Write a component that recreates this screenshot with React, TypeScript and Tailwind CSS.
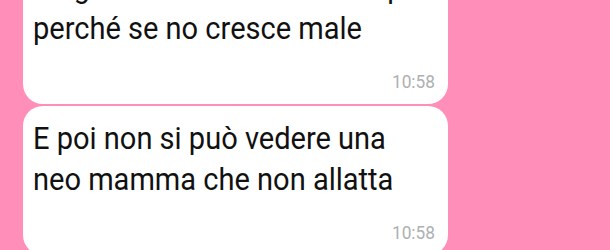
import React from 'react';

const messages = [
  {
    lines: ['Meglio che lo allatti ancora per un po', 'perché se no cresce male'],
    time: '10:58',
  },
  {
    lines: ['E poi non si può vedere una', 'neo mamma che non allatta'],
    time: '10:58',
  },
];

const App = () => {
  return (
    <div className="w-[610px] h-[250px] overflow-hidden bg-[#ff8fb9] font-['Roboto',sans-serif]">
      <div className="-mt-[45px] flex flex-col gap-[2px] pl-[23px]">
        {messages.map((msg, i) => (
          <div key={i} className="w-[425px] overflow-hidden rounded-[20px] bg-white pt-[12px] pb-[10px] pl-[10px] pr-[13px]">
            <p className="origin-left scale-x-[0.907] text-[32px] leading-[41px] text-[#111]">
              {msg.lines.map((line, j) => (
                <span key={j} className="block whitespace-nowrap">{line}</span>
              ))}
            </p>
            <div className="mt-[21px] origin-right scale-x-[0.91] text-right text-[19px] leading-[24px] text-[#aeb0b2]">{msg.time}</div>
          </div>
        ))}
      </div>
    </div>
  );
};

export default App;
